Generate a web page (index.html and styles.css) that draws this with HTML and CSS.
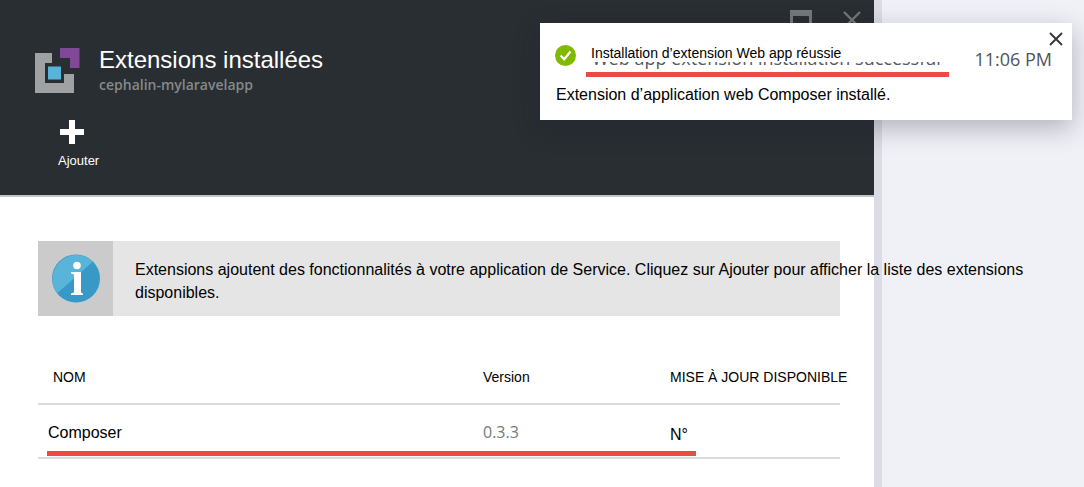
FILE: index.html
```html
<!DOCTYPE html>
<html lang="fr">
<head>
<meta charset="utf-8">
<meta name="viewport" content="width=device-width, initial-scale=1">
<title>Extensions installées</title>
<link rel="stylesheet" href="styles.css">
</head>
<body>
<div class="portal">
  <main class="blade">
    <header class="blade-header">
      <div class="window-controls">
        <button class="icon-button" type="button" aria-label="Agrandir">
          <svg width="22" height="20" viewBox="0 0 22 20"><path d="M0 0H22V20H0ZM3 6V17H19V6Z" fill="#74787a" fill-rule="evenodd"/></svg>
        </button>
        <button class="icon-button" type="button" aria-label="Fermer le panneau">
          <svg width="18" height="18" viewBox="0 0 18 18"><path d="M1 1L17 17M17 1L1 17" stroke="#74787a" stroke-width="2.4"/></svg>
        </button>
      </div>
      <div class="blade-title">
        <svg class="logo" width="45" height="46" viewBox="0 0 45 46" aria-hidden="true">
          <path d="M0 5H17V15H10V35H29V26H39V45H0Z" fill="#a0a1a3"/>
          <path d="M25 0H44.500V20H35V10H25Z" fill="#804998"/>
          <path d="M13 18.500H26V31.500H13Z" fill="#59b4d9"/>
        </svg>
        <div>
          <h1 class="title">Extensions installées</h1>
          <p class="subtitle">cephalin-mylaravelapp</p>
        </div>
      </div>
      <button class="add-button" type="button">
        <svg class="add-icon" width="24" height="24" viewBox="0 0 24 24" aria-hidden="true"><path d="M9 0H15V9H24V15H15V24H9V15H0V9H9Z" fill="#fff"/></svg>
        <span>Ajouter</span>
      </button>
    </header>
    <div class="blade-body">
      <section class="notice">
        <div class="notice-icon">
          <svg width="48" height="49" viewBox="0 0 48 49" aria-hidden="true">
            <circle cx="24" cy="24.500" r="24" fill="#3999c6"/>
            <path d="M5.200 39.300A24 24 0 0 1 41 7.600Z" fill="#59b4d9"/>
            <circle cx="25" cy="11.500" r="3.800" fill="#fff"/>
            <path d="M19 18H29V38.500L31 39.500V41H19V39.500L22 38.500V20.500L19 19.500Z" fill="#fff"/>
          </svg>
        </div>
        <p class="notice-text">Extensions ajoutent des fonctionnalités à votre application de Service. Cliquez sur Ajouter pour afficher la liste des extensions<br>disponibles.</p>
      </section>
      <div class="extensions">
        <table class="table">
          <colgroup><col class="col-name"><col class="col-version"><col></colgroup>
          <thead>
            <tr><th class="name-head" scope="col">NOM</th><th scope="col">Version</th><th scope="col">MISE À JOUR DISPONIBLE</th></tr>
          </thead>
          <tbody>
            <tr><td class="name">Composer</td><td class="version">0.3.3</td><td class="update">N°</td></tr>
          </tbody>
        </table>
        <span class="row-mark"></span>
      </div>
    </div>
  </main>
  <div class="divider"></div>
</div>
<aside class="toast" role="status">
  <button class="icon-button toast-close" type="button" aria-label="Fermer">
    <svg width="14" height="14" viewBox="0 0 14 14"><path d="M1 1L13 13M13 1L1 13" stroke="#34383b" stroke-width="1.900"/></svg>
  </button>
  <div class="toast-head">
    <svg class="toast-check" width="21" height="21" viewBox="0 0 21 21" aria-hidden="true">
      <circle cx="10.500" cy="10.500" r="10.500" fill="#7fba00"/>
      <path d="M5.500 10.500L9.200 14.300L15.500 6.500" fill="none" stroke="#fff" stroke-width="2.200"/>
    </svg>
    <div class="toast-title">
      <span class="toast-original">Web app extension installation successful</span>
      <strong class="toast-name">Installation d’extension Web app réussie</strong>
    </div>
    <time class="toast-time">11:06 PM</time>
  </div>
  <p class="toast-text">Extension d’application web Composer installé.</p>
</aside>
</body>
</html>
```
FILE: styles.css
```css
* {
  box-sizing: border-box;
}

body {
  margin: 0;
  background: #f0f1f7;
  color: #000;
  font: 16px/24px "Liberation Sans", Arial, sans-serif;
  overflow-x: hidden;
}

h1,
p {
  margin: 0;
}

svg {
  display: block;
}

button {
  padding: 0;
  border: 0;
  background: none;
  color: inherit;
  font: inherit;
  cursor: pointer;
}

.portal {
  display: grid;
  grid-template-columns: minmax(0, 1fr) 8px;
  min-height: 100vh;
  padding-right: 202px;
}

.blade {
  background: #fff;
}

.divider {
  background: #dcdce5;
}

.blade-header {
  position: relative;
  padding: 46px 34px 26px;
  border-bottom: 2px solid #c4c4c8;
  background: #292e32;
  color: #fff;
}

.window-controls {
  position: absolute;
  top: 10px;
  right: 13px;
  display: flex;
  gap: 31px;
}

.blade-title {
  display: flex;
  gap: 19px;
  padding-left: 1px;
}

.logo {
  margin-top: 2px;
}

.title {
  font-size: 24px;
  line-height: 28px;
  font-weight: 400;
}

.subtitle {
  color: #86898b;
  font: 600 14px/22px "Open Sans", sans-serif;
}

.add-button {
  display: flex;
  flex-direction: column;
  align-items: flex-start;
  gap: 9px;
  margin: 24px 0 0 24px;
  font-size: 13px;
  line-height: 16px;
}

.add-icon {
  margin-left: 2px;
}

.blade-body {
  padding: 44px 34px 26px 38px;
}

.notice {
  display: flex;
  align-items: stretch;
  min-height: 75px;
  background: #e5e5e5;
}

.notice-icon {
  display: grid;
  flex: 0 0 75px;
  place-items: center;
  background: #cbcbcb;
}

.notice-text {
  position: relative;
  padding: 17px 0 12px 22px;
  line-height: 23px;
  white-space: nowrap;
}

.extensions {
  position: relative;
  margin-top: 34px;
}

.table {
  width: 100%;
  border-collapse: collapse;
  table-layout: fixed;
}

.col-name {
  width: 445px;
}

.col-version {
  width: 187px;
}

th,
td {
  height: 54px;
  padding: 0;
  border-bottom: 2px solid #dcdcdc;
  text-align: left;
  white-space: nowrap;
}

th {
  font-size: 14px;
  font-weight: 400;
}

.name-head {
  padding-left: 15px;
}

.name {
  padding: 3px 0 0 10px;
}

.version {
  padding-top: 2px;
  color: #75797c;
  font-family: "Open Sans", sans-serif;
}

.update {
  padding-top: 8px;
}

.row-mark {
  position: absolute;
  right: 144px;
  bottom: 3px;
  left: 9px;
  height: 5px;
  background: #ec4b45;
}

.toast {
  position: absolute;
  top: 23px;
  right: 12px;
  width: 532px;
  padding: 22px 20px 13px 15px;
  background: #fff;
  box-shadow: 0 8px 24px rgba(30, 30, 50, 0.3);
}

.toast-close {
  position: absolute;
  top: 9px;
  right: 9px;
}

.toast-head {
  display: flex;
  align-items: flex-start;
}

.toast-check {
  flex: none;
}

.toast-title {
  display: grid;
  width: 363px;
  margin-left: 10px;
  border-bottom: 5px solid #ec4b45;
}

.toast-original,
.toast-name {
  grid-area: 1 / 1;
  white-space: nowrap;
}

.toast-original {
  padding-left: 6px;
  color: #55595c;
  font: 18px/27px "Open Sans", sans-serif;
}

.toast-name {
  align-self: start;
  height: 17px;
  padding-left: 5px;
  background: #fff;
  font-size: 14px;
  line-height: 17px;
  font-weight: 400;
}

.toast-time {
  margin-left: auto;
  color: #505458;
  font: 18px/28px "Open Sans", sans-serif;
}

.toast-text {
  padding: 6px 0 0 1px;
}
```
